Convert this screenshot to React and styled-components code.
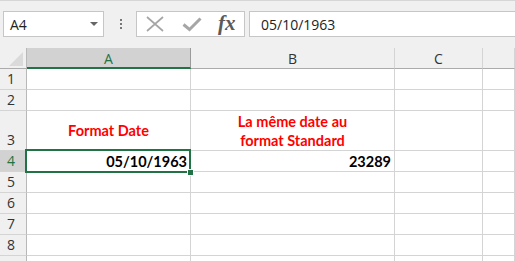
import React from "react"
import styled, {createGlobalStyle} from "styled-components"

const GlobalStyle = createGlobalStyle`
    html, body {
        margin: 0;
        padding: 0;
        background: #ffffff;
        overflow: hidden;
    }
    * { box-sizing: border-box; }
`

const Page = styled.div`
    width: 515px;
    height: 261px;
    overflow: hidden;
    display: flex;
    flex-direction: column;
    font-family: "Open Sans", "Noto Sans", sans-serif;
`

// ---- formula bar ----
const Toolbar = styled.div`
    display: flex;
    align-items: center;
    background: #f0f0f0;
    border-top: 1px solid #d6d6d6;
    padding: 10px 0 11px 3px;
`

const NameBox = styled.div`
    width: 101px;
    height: 26px;
    background: #fff;
    border: 1px solid #c6c6c6;
    display: flex;
    align-items: center;
    justify-content: space-between;
    padding: 0 5px 0 6px;
    font-size: 14px;
    color: #222;
`

const Arrow = styled.span`
    width: 0;
    height: 0;
    border-left: 4px solid transparent;
    border-right: 4px solid transparent;
    border-top: 4px solid #666;
`

const Dots = styled.div`
    display: flex;
    flex-direction: column;
    gap: 2px;
    margin-left: 16px;
    span {
        width: 2px;
        height: 2px;
        background: #777;
    }
`

const FuncBox = styled.div`
    width: 109px;
    height: 26px;
    margin-left: 14px;
    background: #fff;
    border: 1px solid #c6c6c6;
    display: flex;
    align-items: center;
    padding-left: 9px;
`

const Fx = styled.span`
    font-family: "Liberation Serif", "DejaVu Serif", serif;
    font-style: italic;
    font-weight: 700;
    font-size: 21px;
    color: #5a5a5a;
    margin-left: 16px;
    line-height: 1;
    margin-top: -2px;
`

const FormulaInput = styled.div`
    flex: 1;
    height: 26px;
    margin-left: 4px;
    background: #fff;
    border: 1px solid #c6c6c6;
    border-right: none;
    display: flex;
    align-items: center;
    padding-left: 11px;
    font-size: 14px;
    color: #222;
`

// ---- sheet ----
const Sheet = styled.div`
    flex: 1;
    display: grid;
    grid-template-columns: 27px 164px 204px 88px 1fr;
    grid-template-rows: 21px 21px 21px 40px repeat(6, 21px);
    background: #fff;
`

const Corner = styled.div`
    background: #f0f0f0;
    border-right: 1px solid #b8b8b8;
    border-bottom: 1px solid #ababab;
    display: flex;
    align-items: flex-end;
    justify-content: flex-end;
    padding: 0 3px 2px 0;
`

const ColHeader = styled.div`
    background: ${p => p.$selected ? "#d2d2d2" : "#f0f0f0"};
    color: ${p => p.$selected ? "#217346" : "#333"};
    border-right: 1px solid ${p => p.$selected ? "#9b9b9b" : "#d4d4d4"};
    border-bottom: ${p => p.$selected ? "2px solid #217346" : "1px solid #ababab"};
    display: flex;
    align-items: center;
    justify-content: center;
    font-size: 14px;
    padding-top: ${p => p.$selected ? "1px" : "0"};
`

const RowHeader = styled.div`
    background: ${p => p.$selected ? "#d2d2d2" : "#f0f0f0"};
    color: ${p => p.$selected ? "#217346" : "#333"};
    border-right: 1px solid ${p => p.$selected ? "#217346" : "#b8b8b8"};
    border-bottom: 1px solid #d4d4d4;
    display: flex;
    align-items: flex-end;
    padding: 0 0 0 7px;
    font-size: 14px;
    line-height: 20px;
`

const Cell = styled.div`
    position: relative;
    border-right: 1px solid #d4d4d4;
    border-bottom: 1px solid #d4d4d4;
    display: flex;
    flex-direction: column;
    justify-content: ${p => p.$middle ? "center" : "flex-end"};
    align-items: ${p => p.$align === "right" ? "flex-end" : p.$align === "center" ? "center" : "flex-start"};
    text-align: ${p => p.$align || "left"};
    padding: 0 3px 0 3px;
    font-family: Lato, "Open Sans", sans-serif;
    font-size: 14.5px;
    font-weight: ${p => p.$bold ? 700 : 400};
    color: ${p => p.$color || "#000"};
    line-height: 19px;
`

const Selection = styled.div`
    position: absolute;
    z-index: 2;
    left: -2px;
    top: -2px;
    width: 166px;
    height: 24px;
    border: 2px solid #217346;
    pointer-events: none;
`

const Handle = styled.span`
    position: absolute;
    right: -5px;
    bottom: -5px;
    width: 7px;
    height: 7px;
    background: #217346;
    border: 1px solid #fff;
`

const columns = ["A", "B", "C", ""]

const rows = [
    {n: 1},
    {n: 2},
    {n: 3, cells: [
        {text: ["Format Date"], align: "center", middle: true, bold: true, color: "#ff0000"},
        {text: ["La même date au", "format Standard"], align: "center", middle: true, bold: true, color: "#ff0000"},
    ]},
    {n: 4, selected: true, cells: [
        {text: ["05/10/1963"], align: "right", bold: true, selected: true},
        {text: ["23289"], align: "right", bold: true},
    ]},
    {n: 5},
    {n: 6},
    {n: 7},
    {n: 8},
    {n: 9, hidden: true},
]

const App = () => {
    return (
        <>
            <GlobalStyle />
            <Page>
                <Toolbar>
                    <NameBox>A4<Arrow /></NameBox>
                    <Dots><span /><span /><span /></Dots>
                    <FuncBox>
                        <svg width="18" height="16" viewBox="0 0 18 16">
                            <path d="M1 1 L17 15 M17 1 L1 15" stroke="#a6a6a6" strokeWidth="1.7" fill="none" />
                        </svg>
                        <svg width="20" height="15" viewBox="0 0 20 15" style={{marginLeft: 18}}>
                            <path d="M1.5 7.5 L7.5 12.5 L18.5 1.5" stroke="#a6a6a6" strokeWidth="3" fill="none" />
                        </svg>
                        <Fx>fx</Fx>
                    </FuncBox>
                    <FormulaInput>05/10/1963</FormulaInput>
                </Toolbar>

                <Sheet>
                    <Corner>
                        <svg width="14" height="14" viewBox="0 0 14 14">
                            <polygon points="14,0 14,14 0,14" fill="#dadada" />
                        </svg>
                    </Corner>
                    {columns.map((c, i) => (
                        <ColHeader key={i} $selected={c === "A"}>{c}</ColHeader>
                    ))}

                    {rows.map(r => (
                        <React.Fragment key={r.n}>
                            <RowHeader $selected={r.selected}>{r.hidden ? "" : r.n}</RowHeader>
                            {columns.map((c, i) => {
                                const cell = r.cells && r.cells[i]
                                return (
                                    <Cell key={i} $align={cell?.align} $middle={cell?.middle} $bold={cell?.bold} $color={cell?.color}>
                                        {cell && cell.text.map((t, j) => <span key={j}>{t}</span>)}
                                        {cell?.selected && <Selection><Handle /></Selection>}
                                    </Cell>
                                )
                            })}
                        </React.Fragment>
                    ))}
                </Sheet>
            </Page>
        </>
    )
}

export default App
